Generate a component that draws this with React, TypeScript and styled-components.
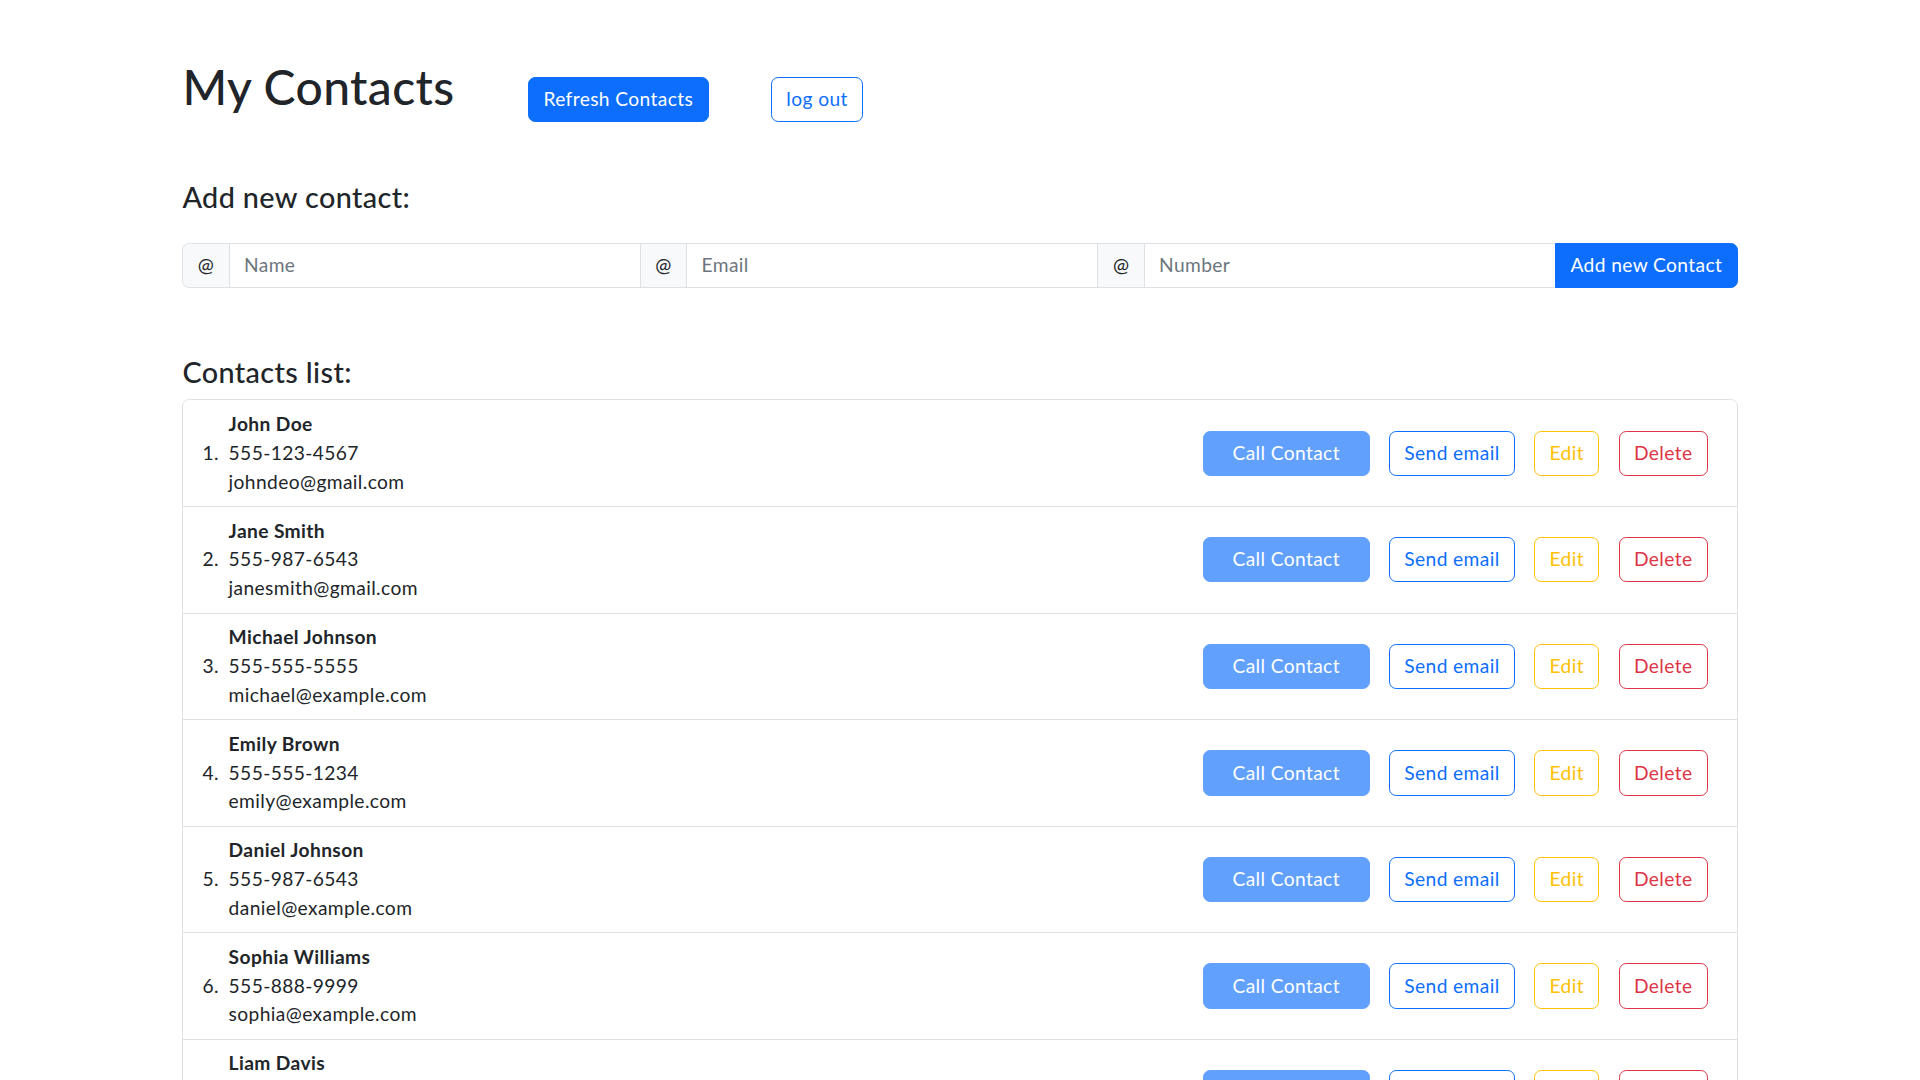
import styled, { createGlobalStyle, css } from 'styled-components'

const GlobalStyle = createGlobalStyle`
  html {
    font-size: 19.2px;
  }

  body {
    margin: 0;
    background: #fff;
    color: #212529;
    font-family: Lato, "Open Sans", "Liberation Sans", sans-serif;
    font-size: 1rem;
    line-height: 1.5;
    letter-spacing: 0.02em;
  }

  *, *::before, *::after {
    box-sizing: border-box;
  }
`

type Variant = 'primary' | 'outlinePrimary' | 'outlineWarning' | 'outlineDanger'

const COLOR = {
  TEXT: '#212529',
  PRIMARY: '#0d6efd',
  WARNING: '#ffc107',
  DANGER: '#dc3545',
  BORDER: '#dee2e6',
  MUTED: '#6c757d',
  ADDON: '#f8f9fa',
}

interface IContact {
  name: string
  phone: string
  email: string
}

const contacts: IContact[] = [
  { name: 'John Doe', phone: '555-123-4567', email: 'johndeo@gmail.com' },
  { name: 'Jane Smith', phone: '555-987-6543', email: 'janesmith@gmail.com' },
  { name: 'Michael Johnson', phone: '555-555-5555', email: 'michael@example.com' },
  { name: 'Emily Brown', phone: '555-555-1234', email: 'emily@example.com' },
  { name: 'Daniel Johnson', phone: '555-987-6543', email: 'daniel@example.com' },
  { name: 'Sophia Williams', phone: '555-888-9999', email: 'sophia@example.com' },
  { name: 'Liam Davis', phone: '555-222-3333', email: 'liam@example.com' },
]

export default function App() {
  return (
    <>
      <GlobalStyle />
      <Container>
        <Header>
          <Title>My Contacts</Title>
          <HeaderButton $variant="primary">Refresh Contacts</HeaderButton>
          <HeaderButton $variant="outlinePrimary" $gap>
            log out
          </HeaderButton>
        </Header>

        <SectionHeading>Add new contact:</SectionHeading>
        <InputGroup>
          <Addon>@</Addon>
          <Input placeholder="Name" />
          <Addon>@</Addon>
          <Input placeholder="Email" />
          <Addon>@</Addon>
          <Input placeholder="Number" />
          <AddButton $variant="primary">Add new Contact</AddButton>
        </InputGroup>

        <SectionHeading $spaced>Contacts list:</SectionHeading>
        <List>
          {contacts.map((c) => (
            <Item key={c.name}>
              <Info>
                <Name>{c.name}</Name>
                <div>{c.phone}</div>
                <div>{c.email}</div>
              </Info>
              <Actions>
                <ActionButton $variant="primary" disabled>
                  Call Contact
                </ActionButton>
                <ActionButton $variant="outlinePrimary">Send email</ActionButton>
                <ActionButton $variant="outlineWarning">Edit</ActionButton>
                <ActionButton $variant="outlineDanger">Delete</ActionButton>
              </Actions>
            </Item>
          ))}
        </List>
      </Container>
    </>
  )
}

const Container = styled.div`
  width: 82.5rem;
  max-width: 100%;
  margin: 0 auto;
  padding: 3rem 0.75rem 2rem;
`

const Header = styled.div`
  display: flex;
  align-items: flex-start;
`

const Title = styled.h1`
  flex: 0 0 18rem;
  margin: 0;
  font-size: 2.5rem;
  font-weight: 500;
  line-height: 1.2;
`

const variantStyle = {
  primary: css`
    color: #fff;
    background: ${COLOR.PRIMARY};
    border-color: ${COLOR.PRIMARY};
  `,
  outlinePrimary: css`
    color: ${COLOR.PRIMARY};
    background: transparent;
    border-color: ${COLOR.PRIMARY};
  `,
  outlineWarning: css`
    color: ${COLOR.WARNING};
    background: transparent;
    border-color: ${COLOR.WARNING};
  `,
  outlineDanger: css`
    color: ${COLOR.DANGER};
    background: transparent;
    border-color: ${COLOR.DANGER};
  `,
}

const Button = styled.button<{ $variant: Variant }>`
  display: inline-block;
  padding: 0.375rem 0.75rem;
  font-family: inherit;
  font-size: 1rem;
  font-weight: 400;
  line-height: 1.5;
  letter-spacing: inherit;
  border: 1px solid transparent;
  border-radius: 0.375rem;
  white-space: nowrap;
  cursor: pointer;
  ${({ $variant }) => variantStyle[$variant]}

  &:disabled {
    opacity: 0.65;
    cursor: default;
  }
`

const HeaderButton = styled(Button)<{ $gap?: boolean }>`
  margin-top: 1rem;
  margin-left: ${({ $gap }) => ($gap ? '3.25rem' : '0')};
`

const SectionHeading = styled.h4<{ $spaced?: boolean }>`
  margin: ${({ $spaced }) => ($spaced ? '3.5rem 0 0.5rem' : '3rem 0 1.5rem')};
  font-size: 1.5rem;
  font-weight: 500;
  line-height: 1.2;
`

const InputGroup = styled.div`
  display: flex;
  align-items: stretch;
  width: 100%;
`

const Addon = styled.span`
  display: flex;
  align-items: center;
  padding: 0.375rem 0.75rem;
  font-size: 1rem;
  line-height: 1.5;
  color: ${COLOR.TEXT};
  background: ${COLOR.ADDON};
  border: 1px solid ${COLOR.BORDER};

  &:first-child {
    border-radius: 0.375rem 0 0 0.375rem;
  }

  & + * {
    margin-left: -1px;
  }
`

const Input = styled.input`
  flex: 1 1 auto;
  min-width: 0;
  padding: 0.375rem 0.75rem;
  font-family: inherit;
  font-size: 1rem;
  line-height: 1.5;
  letter-spacing: inherit;
  color: ${COLOR.TEXT};
  background: #fff;
  border: 1px solid ${COLOR.BORDER};
  border-radius: 0;
  outline: none;

  & + * {
    margin-left: -1px;
  }

  &::placeholder {
    color: ${COLOR.MUTED};
  }
`

const AddButton = styled(Button)`
  border-radius: 0 0.375rem 0.375rem 0;
`

const List = styled.ol`
  margin: 0;
  padding: 0;
  list-style: none;
  counter-reset: section;
  border: 1px solid ${COLOR.BORDER};
  border-radius: 0.375rem;
`

const Item = styled.li`
  display: flex;
  align-items: center;
  padding: 0.5rem 1rem;
  counter-increment: section;

  & + & {
    border-top: 1px solid ${COLOR.BORDER};
  }

  &::before {
    content: counters(section, '.') '. ';
  }
`

const Info = styled.div`
  margin-left: 0.5rem;
  margin-right: auto;
`

const Name = styled.div`
  font-weight: 700;
`

const Actions = styled.div`
  display: flex;
  align-items: center;
`

const ActionButton = styled(Button)`
  margin: 0 0.5rem;

  &:first-child {
    padding: 0.375rem 1.5rem;
  }
`
